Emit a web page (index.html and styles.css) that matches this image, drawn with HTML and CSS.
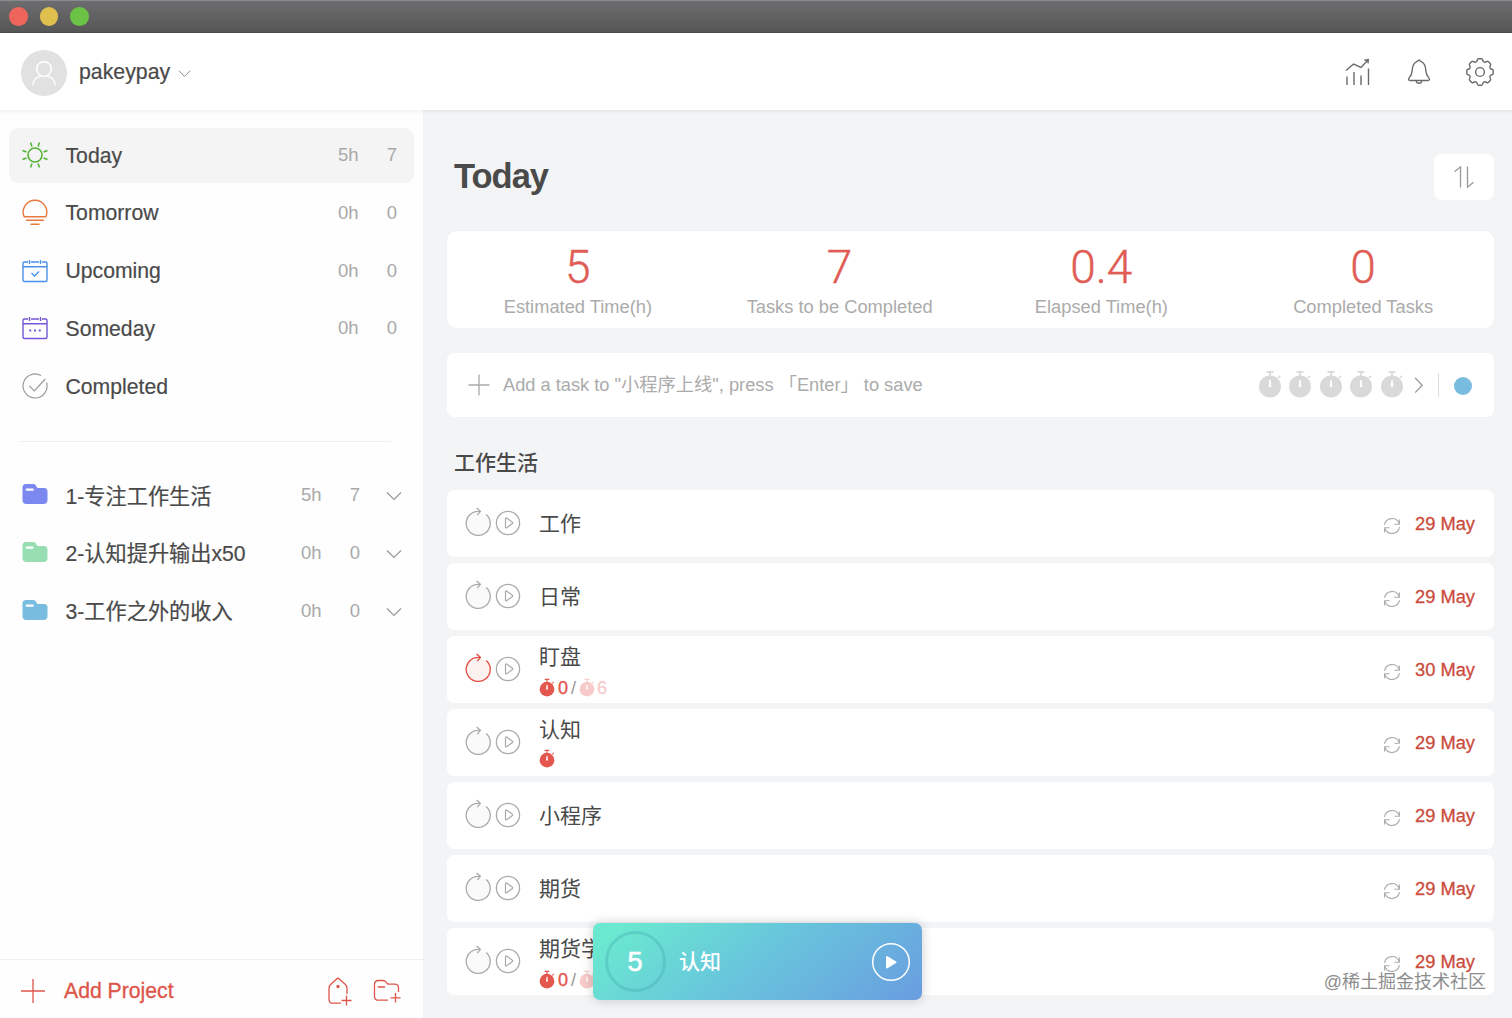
FILE: index.html
```html
<!DOCTYPE html>
<html lang="zh-CN">
<head>
    <meta charset="UTF-8">
    <meta name="viewport" content="width=device-width, initial-scale=1.0">
    <title>Today</title>
    <link rel="stylesheet" href="styles.css">
</head>
<body>
    <!-- Shared icons -->
    <svg class="sprite" width="0" height="0">
        <symbol id="chevron" viewBox="0 0 16 10">
            <path d="M1 1.500l7 7 7-7" fill="none" stroke="currentColor" stroke-width="1.200"/>
        </symbol>
        <symbol id="folder" viewBox="0 0 26 22">
            <path d="M4 1h7c1.500 0 2.200.500 2.800 1.500l1 1.800c.3.500.7.700 1.300.700H22a3.500 3.500 0 0 1 3.500 3.500V17a4 4 0 0 1-4 4H4.500a4 4 0 0 1-4-4V4.500A3.500 3.500 0 0 1 4 1z" fill="currentColor"/>
            <path d="M4.700 6.700h6" stroke="#fff" stroke-width="2.200" stroke-linecap="round"/>
        </symbol>
        <symbol id="timer" viewBox="0 0 24 28">
            <circle cx="12" cy="16.500" r="11" fill="currentColor"/>
            <path d="M8.500 1.800h7M12 1.500v5M20 8l2-2.300" stroke="currentColor" stroke-width="1.700"/>
            <path d="M11.300 10h1.400l.6 6a1.300 1.300 0 1 1-2.600 0z" fill="#fff"/>
        </symbol>
        <symbol id="repeat" viewBox="0 0 26 30">
            <path class="fill" d="M21.200 7.400A12 12 0 1 1 10.500 4.700z"/>
            <path d="M21.200 7.400A12 12 0 1 1 10.500 4.700Q12.800 4.200 15.200 4.400M11.600.900l3.800 3.500-3.100 3.700" fill="none" stroke="currentColor" stroke-width="1.300"/>
        </symbol>
        <symbol id="play" viewBox="0 0 26 26">
            <circle cx="13" cy="13" r="11.600" fill="none" stroke="currentColor" stroke-width="1.300"/>
            <path d="M10.500 8.700c0-.8.600-1 1.200-.6l5.700 4.200c.5.400.5.900 0 1.300l-5.700 4.200c-.6.400-1.200.200-1.200-.6z" fill="none" stroke="currentColor" stroke-width="1.200"/>
        </symbol>
        <symbol id="sync" viewBox="0 0 18 18">
            <path d="M1.500 7.800a7.600 7.600 0 0 1 14.500-1.500M16.500 10.200a7.600 7.600 0 0 1-14.500 1.500M16.400 2.600v4.600h-5M1.600 15.400v-4.600h5" fill="none" stroke="currentColor" stroke-width="1.100"/>
        </symbol>
    </svg>

    <div class="app">
        <div class="titlebar">
            <span class="dot red"></span>
            <span class="dot yellow"></span>
            <span class="dot green"></span>
        </div>

        <header class="header">
            <div class="avatar">
                <svg width="26" height="28" viewBox="0 0 26 28" fill="none" stroke="#fff" stroke-width="1.500">
                    <circle cx="13" cy="10" r="7.300"/>
                    <path d="M1.500 26c1-5.500 5-8.500 8.500-9M24.500 26c-1-5.500-5-8.500-8.500-9"/>
                </svg>
            </div>
            <span class="username">pakeypay</span>
            <svg class="user-arrow" width="13" height="9"><use href="#chevron"/></svg>
            <div class="tools">
                <svg width="28" height="28" viewBox="0 0 28 28">
                    <path d="M3 18.500V27M10 14v13M17 17.500V27M24.500 10.500V27M2 12.500l7.500-6.500 7.500 3.500L24 2M20.300 2.200l4-.6-.3 3.800"/>
                </svg>
                <svg width="24" height="28" viewBox="0 0 24 28">
                    <path d="M12 2.200c1.500 0 1.500 1.300 2.500 1.700 3.300 1.300 4.100 4.500 4.300 8.600.2 3.300 1.100 5.200 3 7.400 1 1.200.9 2.600-.8 2.600H3c-1.700 0-1.800-1.400-.8-2.600 1.900-2.200 2.800-4.100 3-7.400.2-4.100 1-7.300 4.300-8.600 1-.4 1-1.700 2.500-1.700zM9.200 23c.4 3 5.200 3 5.600 0"/>
                </svg>
                <svg width="28" height="28" viewBox="-14 -14 28 28">
                    <circle cx="0" cy="0" r="4.400"/>
                    <path d="M-1.500-13.200H1.500Q2.500-13.200 2.700-12C3.100-9.900 4.810-9.190 6.580-10.390Q7.570-11.100 8.270-10.390L10.390-8.270Q11.100-7.570 10.390-6.580C9.190-4.810 9.900-3.100 12-2.700Q13.200-2.500 13.200-1.500V1.500Q13.200 2.500 12 2.700C9.900 3.100 9.190 4.810 10.390 6.580Q11.100 7.570 10.390 8.270L8.270 10.390Q7.570 11.100 6.580 10.390C4.810 9.190 3.100 9.900 2.700 12Q2.500 13.200 1.500 13.200H-1.500Q-2.500 13.200-2.700 12C-3.100 9.900-4.810 9.190-6.580 10.390Q-7.570 11.100-8.270 10.390L-10.390 8.270Q-11.100 7.570-10.390 6.580C-9.190 4.810-9.900 3.100-12 2.700Q-13.200 2.500-13.200 1.500V-1.500Q-13.200-2.500-12-2.700C-9.900-3.100-9.190-4.810-10.390-6.580Q-11.100-7.570-10.390-8.270L-8.270-10.390Q-7.570-11.100-6.580-10.390C-4.810-9.190-3.100-9.900-2.700-12Q-2.500-13.200-1.500-13.200z"/>
                </svg>
            </div>
        </header>

        <div class="body">
            <aside class="sidebar">
                <nav class="nav">
                    <div class="nav-item active">
                        <svg class="icon" viewBox="0 0 28 28" fill="none" stroke="#55b137" stroke-width="1.600">
                            <circle cx="14" cy="14" r="7"/>
                            <path d="M11 5.500L9.500 1.500M17 5.500l1.500-4M22.500 11l4-1.500M22.500 17l4 1.500M17 22.500l1.500 4M11 22.500l-1.500 4M5.500 17l-4 1.500M5.500 11l-4-1.500"/>
                        </svg>
                        <span class="name">Today</span><span class="hours">5h</span><span class="count">7</span>
                    </div>
                    <div class="nav-item">
                        <svg class="icon" viewBox="0 0 28 28" fill="none" stroke="#e8793f" stroke-width="1.400">
                            <path d="M3.200 17.800a11.800 11.800 0 1 1 21.600 0zM5 21.300h18M9.500 25.300h9"/>
                        </svg>
                        <span class="name">Tomorrow</span><span class="hours">0h</span><span class="count">0</span>
                    </div>
                    <div class="nav-item">
                        <svg class="icon" viewBox="0 0 28 28" fill="none" stroke="#4a90ea" stroke-width="1.400">
                            <path d="M7 5H3.500Q2 5 2 6.500V23q0 1.500 1.500 1.500h21Q26 24.500 26 23V6.500Q26 5 24.500 5H21M10 5h8M2 9.700h24M8.500 3v4M19.500 3v4M10.500 16l3 3 4.500-4.500"/>
                        </svg>
                        <span class="name">Upcoming</span><span class="hours">0h</span><span class="count">0</span>
                    </div>
                    <div class="nav-item">
                        <svg class="icon" viewBox="0 0 28 28" fill="none" stroke="#7357d8" stroke-width="1.400">
                            <path d="M7 5H3.500Q2 5 2 6.500V23q0 1.500 1.500 1.500h21Q26 24.500 26 23V6.500Q26 5 24.500 5H21M10 5h8M2 9.700h24M8.500 3v4M19.500 3v4"/>
                            <path d="M8.200 16.500h2M13 16.500h2M17.800 16.500h2" stroke-width="2"/>
                        </svg>
                        <span class="name">Someday</span><span class="hours">0h</span><span class="count">0</span>
                    </div>
                    <div class="nav-item">
                        <svg class="icon" viewBox="0 0 28 28" fill="none" stroke="#999" stroke-width="1.200">
                            <path d="M20 3.600A12 12 0 1 0 25.500 10.500M8.300 13.800l5 5L24.300 7"/>
                        </svg>
                        <span class="name">Completed</span>
                    </div>
                </nav>

                <hr class="divider">

                <div class="nav projects">
                    <div class="nav-item">
                        <svg class="icon folder-blue"><use href="#folder" x="1" y="2" width="26" height="22"/></svg>
                        <span class="name">1-专注工作生活</span><span class="hours">5h</span><span class="count">7</span>
                        <svg class="arrow" width="16" height="10"><use href="#chevron"/></svg>
                    </div>
                    <div class="nav-item">
                        <svg class="icon folder-green"><use href="#folder" x="1" y="2" width="26" height="22"/></svg>
                        <span class="name">2-认知提升输出x50</span><span class="hours">0h</span><span class="count">0</span>
                        <svg class="arrow" width="16" height="10"><use href="#chevron"/></svg>
                    </div>
                    <div class="nav-item">
                        <svg class="icon folder-cyan"><use href="#folder" x="1" y="2" width="26" height="22"/></svg>
                        <span class="name">3-工作之外的收入</span><span class="hours">0h</span><span class="count">0</span>
                        <svg class="arrow" width="16" height="10"><use href="#chevron"/></svg>
                    </div>
                </div>

                <div class="sidebar-footer">
                    <svg width="26" height="26" viewBox="0 0 26 26"><path d="M13 1v24M1 13h24"/></svg>
                    <span class="add-project">Add Project</span>
                    <svg width="26" height="30" viewBox="0 0 26 30">
                        <path d="M14 27.200H6Q2 27.200 2 23.200V12.300Q2 10 3.600 8.600L9.600 3q1.400-1.400 2.800 0l6 5.600Q20 10 20 12.300V18M19.500 19.500v10M14.500 24.500h10"/>
                        <circle cx="11" cy="10.500" r="1" fill="#dd5449"/>
                    </svg>
                    <svg width="28" height="26" viewBox="0 0 28 26">
                        <path d="M15 22.200H5.500Q1.500 22.200 1.500 18.200V6.500Q1.500 2.500 5.500 2.500H10Q12 2.500 13 4l.8 1.200q.6.900 1.800.9h6Q25.500 6.100 25.500 10v4M4.800 9H12M22.500 15v9.500M17.500 19.800H27.500"/>
                    </svg>
                </div>
            </aside>

            <main class="main">
                <div class="page-head">
                    <h1>Today</h1>
                    <button class="sort-btn" type="button">
                        <svg width="22" height="24" viewBox="0 0 22 24" fill="none" stroke="#999" stroke-width="1.300">
                            <path d="M1.500 6.700L7.500 1.800V22.500M14.500 1.500v20.700l6-5"/>
                        </svg>
                    </button>
                </div>

                <section class="stats">
                    <div class="stat"><b>5</b><span>Estimated Time(h)</span></div>
                    <div class="stat"><b>7</b><span>Tasks to be Completed</span></div>
                    <div class="stat"><b>0.4</b><span>Elapsed Time(h)</span></div>
                    <div class="stat"><b>0</b><span>Completed Tasks</span></div>
                </section>

                <div class="add-task">
                    <svg width="22" height="22" viewBox="0 0 22 22"><path d="M11 .500v21M.500 11h21" stroke="#aaa" stroke-width="1.300"/></svg>
                    <span class="placeholder">Add a task to "小程序上线", press 「Enter」 to save</span>
                    <div class="timers">
                        <svg width="24" height="28"><use href="#timer"/></svg>
                        <svg width="24" height="28"><use href="#timer"/></svg>
                        <svg width="24" height="28"><use href="#timer"/></svg>
                        <svg width="24" height="28"><use href="#timer"/></svg>
                        <svg width="24" height="28"><use href="#timer"/></svg>
                    </div>
                    <svg class="more" width="10" height="18" viewBox="0 0 10 18"><path d="M1.200 2L8.200 9.300l-7 7.300" fill="none" stroke="#999" stroke-width="1.300"/></svg>
                    <span class="bar"></span>
                    <span class="color-dot"></span>
                </div>

                <h2>工作生活</h2>

                <div class="tasks">
                    <div class="task">
                        <svg class="repeat" width="26" height="30"><use href="#repeat"/></svg>
                        <svg class="play" width="26" height="26"><use href="#play"/></svg>
                        <div class="info"><div class="title">工作</div></div>
                        <svg class="sync" width="18" height="18"><use href="#sync"/></svg>
                        <span class="date">29 May</span>
                    </div>
                    <div class="task">
                        <svg class="repeat" width="26" height="30"><use href="#repeat"/></svg>
                        <svg class="play" width="26" height="26"><use href="#play"/></svg>
                        <div class="info"><div class="title">日常</div></div>
                        <svg class="sync" width="18" height="18"><use href="#sync"/></svg>
                        <span class="date">29 May</span>
                    </div>
                    <div class="task">
                        <svg class="repeat high" width="26" height="30"><use href="#repeat"/></svg>
                        <svg class="play" width="26" height="26"><use href="#play"/></svg>
                        <div class="info">
                            <div class="title">盯盘</div>
                            <div class="pomodoro">
                                <svg width="16" height="19"><use href="#timer"/></svg><span>0</span><i>/</i>
                                <span class="left"><svg width="16" height="19"><use href="#timer"/></svg>6</span>
                            </div>
                        </div>
                        <svg class="sync" width="18" height="18"><use href="#sync"/></svg>
                        <span class="date">30 May</span>
                    </div>
                    <div class="task">
                        <svg class="repeat" width="26" height="30"><use href="#repeat"/></svg>
                        <svg class="play" width="26" height="26"><use href="#play"/></svg>
                        <div class="info">
                            <div class="title">认知</div>
                            <div class="pomodoro single"><svg width="16" height="19"><use href="#timer"/></svg></div>
                        </div>
                        <svg class="sync" width="18" height="18"><use href="#sync"/></svg>
                        <span class="date">29 May</span>
                    </div>
                    <div class="task">
                        <svg class="repeat" width="26" height="30"><use href="#repeat"/></svg>
                        <svg class="play" width="26" height="26"><use href="#play"/></svg>
                        <div class="info"><div class="title">小程序</div></div>
                        <svg class="sync" width="18" height="18"><use href="#sync"/></svg>
                        <span class="date">29 May</span>
                    </div>
                    <div class="task">
                        <svg class="repeat" width="26" height="30"><use href="#repeat"/></svg>
                        <svg class="play" width="26" height="26"><use href="#play"/></svg>
                        <div class="info"><div class="title">期货</div></div>
                        <svg class="sync" width="18" height="18"><use href="#sync"/></svg>
                        <span class="date">29 May</span>
                    </div>
                    <div class="task">
                        <svg class="repeat" width="26" height="30"><use href="#repeat"/></svg>
                        <svg class="play" width="26" height="26"><use href="#play"/></svg>
                        <div class="info">
                            <div class="title">期货学</div>
                            <div class="pomodoro">
                                <svg width="16" height="19"><use href="#timer"/></svg><span>0</span><i>/</i>
                                <span class="left"><svg width="16" height="19"><use href="#timer"/></svg></span>
                            </div>
                        </div>
                        <svg class="sync" width="18" height="18"><use href="#sync"/></svg>
                        <span class="date">29 May</span>
                    </div>
                </div>
            </main>
        </div>

        <!-- Floating focus timer -->
        <div class="focus-bar">
            <span class="ring">5</span>
            <span class="focus-name">认知</span>
            <svg width="40" height="40" viewBox="0 0 40 40">
                <circle cx="20" cy="20" r="18.300" fill="none" stroke="#fff" stroke-width="1.500"/>
                <path d="M16 15v10.500l8.500-5.250z" fill="#fff" stroke="#fff" stroke-width="2" stroke-linejoin="round"/>
            </svg>
        </div>

        <div class="watermark">@稀土掘金技术社区</div>
    </div>
</body>
</html>
```

FILE: styles.css
```css
* {
    box-sizing: border-box;
}

body {
    margin: 0;
    font-family: "Liberation Sans", "Noto Sans CJK SC", sans-serif;
    color: #4a4a4a;
    background-color: #fff;
}

svg {
    display: block;
    flex: none;
}

.sprite {
    position: absolute;
}

.app {
    position: relative;
    height: 1018px;
    display: flex;
    flex-direction: column;
    overflow: hidden;
}

/* Window bar */
.titlebar {
    height: 33px;
    flex: none;
    display: flex;
    align-items: center;
    gap: 12px;
    padding-left: 9px;
    background: linear-gradient(#6d6d6f, #565657);
    border-top: 1px solid #8b8b8d;
    border-bottom: 1px solid #4c4c4c;
}

.dot {
    width: 18.5px;
    height: 18.5px;
    border-radius: 50%;
}

.red { background-color: #ee655b; }
.yellow { background-color: #dfc04f; }
.green { background-color: #6cc245; }

/* Header */
.header {
    height: 77px;
    flex: none;
    display: flex;
    align-items: center;
    padding: 0 18px 0 21px;
    background-color: #fff;
    box-shadow: 0 1px 4px rgba(0, 0, 0, 0.08);
    position: relative;
}

.avatar {
    width: 46px;
    height: 46px;
    margin-top: 3px;
    border-radius: 50%;
    background-color: #e1e1e1;
    display: flex;
    align-items: center;
    justify-content: center;
}

.username {
    margin: 2px 0 0 12px;
    font-size: 21.3px;
    -webkit-text-stroke: 0.2px;
}

.user-arrow {
    margin: 4px 0 0 8px;
    color: #888;
}

.tools {
    margin-left: auto;
    display: flex;
    gap: 35px;
}

.tools svg {
    fill: none;
    stroke: #6b6b6b;
    stroke-width: 1.4;
}

.body {
    flex: 1;
    display: flex;
    min-height: 0;
}

/* Sidebar */
.sidebar {
    width: 424px;
    flex: none;
    display: flex;
    flex-direction: column;
    padding-top: 18px;
    background-color: #fefefe;
    border-right: 1px solid #eff1f2;
}

.nav {
    display: flex;
    flex-direction: column;
    gap: 2.8px;
    padding: 0 9px;
}

.nav-item {
    height: 55px;
    display: flex;
    align-items: center;
    padding: 0 17px 1px 12px;
    border-radius: 9px;
    font-size: 21.2px;
}

.nav-item.active {
    background-color: #f4f4f4;
}

.icon {
    width: 28px;
    height: 28px;
}

.name {
    flex: 1;
    margin: 1px 0 0 16.5px;
    -webkit-text-stroke: 0.2px;
}

.projects .name {
    margin-top: -2px;
}

.hours,
.count {
    font-size: 18.5px;
    color: #a9a9a9;
}

.count {
    width: 38.5px;
    text-align: right;
}

.divider {
    width: 371px;
    height: 1px;
    margin: 27px 0 26px 20px;
    border: 0;
    background-color: #f0f0f0;
}

.projects .nav-item {
    padding-right: 12px;
}

.arrow {
    margin: 2px 0 0 26px;
    color: #999;
}

.folder-blue { color: #7b88f0; }
.folder-green { color: #97dfb3; }
.folder-cyan { color: #78bce0; }

.sidebar-footer {
    height: 59px;
    margin-top: auto;
    display: flex;
    align-items: center;
    padding: 4px 22px 0 20px;
    border-top: 1px solid #eee;
    color: #dd5449;
}

.sidebar-footer svg {
    fill: none;
    stroke: #dd5449;
    stroke-width: 1.3;
}

.sidebar-footer svg + svg {
    margin-left: 20px;
}

.add-project {
    flex: 1;
    margin-left: 18px;
    font-size: 21.2px;
    -webkit-text-stroke: 0.3px;
}

/* Main column */
.main {
    flex: 1;
    min-width: 0;
    padding: 44px 18px 0 23px;
    background-color: #f2f4f6;
}

.page-head {
    display: flex;
    align-items: center;
    justify-content: space-between;
    height: 46px;
}

h1 {
    margin: -2px 0 0 7px;
    font-size: 34.5px;
    line-height: 44px;
    letter-spacing: -1px;
}

.sort-btn {
    width: 60px;
    height: 46px;
    padding: 0;
    border: 0;
    border-radius: 7px;
    background-color: #fff;
    display: flex;
    align-items: center;
    justify-content: center;
}

.stats {
    height: 97px;
    margin-top: 31px;
    display: flex;
    border-radius: 9px;
    background-color: #fff;
    box-shadow: 0 0 2px rgba(0, 0, 0, 0.05);
}

.stat {
    flex: 1;
    display: flex;
    flex-direction: column;
    align-items: center;
    color: #ababab;
    font-size: 18.3px;
}

.stat b {
    height: 65px;
    font-family: Roboto, sans-serif;
    font-size: 46px;
    font-weight: 300;
    line-height: 72px;
    color: #e05c55;
    -webkit-text-stroke: 0.4px;
}

.add-task {
    height: 64px;
    margin-top: 25px;
    display: flex;
    align-items: center;
    padding: 0 22px 0 21px;
    border-radius: 7px;
    background-color: #fff;
}

.placeholder {
    flex: 1;
    margin: -4px 0 0 13px;
    font-size: 18.25px;
    color: #ababab;
}

.timers {
    display: flex;
    gap: 6.4px;
    color: #d9d9d9;
}

.timers svg {
    margin-top: -2px;
}

.more {
    margin-left: 10px;
}

.bar {
    width: 1px;
    height: 24px;
    margin: 0 15px 0 14px;
    background-color: #ddd;
}

.color-dot {
    width: 18.5px;
    height: 18.5px;
    margin-top: 2px;
    border-radius: 50%;
    background-color: #78bce0;
}

h2 {
    height: 73px;
    margin: 0 0 0 7px;
    font-size: 21px;
    font-weight: 500;
    line-height: 91px;
}

.tasks {
    display: flex;
    flex-direction: column;
    gap: 6px;
}

.task {
    height: 67px;
    display: flex;
    align-items: center;
    padding: 0 19px 0 18px;
    border-radius: 7px;
    background-color: #fff;
    color: #aaa;
}

.repeat {
    margin-top: -3px;
    fill: #fafafa;
}

.repeat.high {
    color: #e04a3f;
    fill: #fcf2ef;
}

.play {
    margin: -1px 0 0 4px;
}

.info {
    flex: 1;
    margin-left: 18px;
}

.title {
    font-size: 21px;
    line-height: 30px;
    color: #4a4a4a;
}

.pomodoro {
    height: 22px;
    margin-top: 3px;
    display: flex;
    align-items: center;
    font-size: 18px;
    position: relative;
    top: 2px;
    color: #e4574f;
}

.pomodoro.single {
    height: 22px;
    top: 0;
}

.pomodoro span {
    margin-left: 3px;
    -webkit-text-stroke: 0.4px;
}

.pomodoro svg {
    margin-top: -2px;
}

.pomodoro i {
    margin-left: 3px;
    font-style: normal;
    color: #999;
}

.pomodoro .left {
    display: flex;
    align-items: center;
    gap: 2px;
    opacity: 0.3;
}

.sync {
    margin-top: 4px;
}

.date {
    margin-left: 14px;
    font-size: 18.3px;
    color: #cb4b3c;
    -webkit-text-stroke: 0.3px;
}

/* Focus timer sits over the list */
.focus-bar {
    position: absolute;
    left: 593px;
    top: 923px;
    width: 329px;
    height: 77px;
    display: flex;
    align-items: center;
    padding: 0 11px 0 12px;
    border-radius: 7px;
    background: linear-gradient(140deg, #6ae8d0 8%, #68c4dc 50%, #699de0 100%);
    box-shadow: 0 0 12px rgba(0, 0, 0, 0.2);
    color: #fff;
}

.ring {
    width: 61px;
    height: 61px;
    display: flex;
    align-items: center;
    justify-content: center;
    padding: 2px 1px 0 0;
    border: 3px solid rgba(60, 160, 170, 0.3);
    border-radius: 50%;
    font-size: 27px;
    -webkit-text-stroke: 0.6px;
}

.focus-name {
    flex: 1;
    margin: -4px 0 0 13px;
    font-size: 21px;
    font-weight: 500;
}

.watermark {
    position: absolute;
    right: 26px;
    bottom: 22px;
    font-size: 18px;
    line-height: 27px;
    color: #8d8d8d;
    text-shadow: 1px 1px 0 #fff, -1px -1px 0 rgba(255, 255, 255, 0.7);
}
```
